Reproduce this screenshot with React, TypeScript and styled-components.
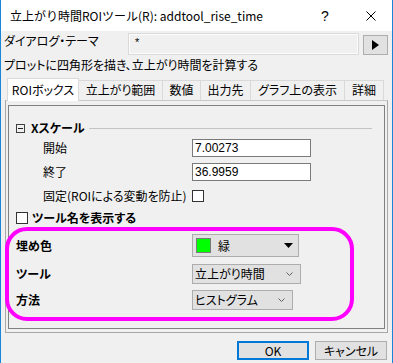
import React from "react";
import styled, { createGlobalStyle } from "styled-components";

const FONT = `"Noto Sans CJK JP", "Noto Sans", sans-serif`;

const GlobalStyle = createGlobalStyle`
  html, body { margin: 0; padding: 0; background: #f0f0f0; }
  body { width: 393px; height: 363px; overflow: hidden; }
`;

const Window = styled.div`
  width: 393px;
  height: 363px;
  box-sizing: border-box;
  border-left: 1px solid #1a86d9;
  border-right: 1px solid #1a86d9;
  background: #f0f0f0;
  display: flex;
  flex-direction: column;
  overflow: hidden;
  font-family: ${FONT};
  font-size: 12px;
  line-height: 16px;
  color: #000;
  font-feature-settings: "palt";
`;

const TitleBar = styled.div`
  height: 31px;
  flex-shrink: 0;
  background: #fff;
  display: flex;
  align-items: center;
  padding-left: 9px;
`;

const Title = styled.div`
  flex: 1;
  font-size: 12px;
  line-height: 16px;
  font-feature-settings: normal;
`;

const HelpGlyph = styled.div`
  width: 14px;
  text-align: center;
  font-family: "Liberation Sans", sans-serif;
  font-size: 14px;
  margin-right: 34px;
`;

const CloseGlyph = styled.svg`
  width: 10px;
  height: 10px;
  margin-right: 16px;
`;

const Body = styled.div`
  display: flex;
  flex-direction: column;
  padding-left: 3px;
`;

const ThemeRow = styled.div`
  display: flex;
  margin-top: 2px;
  height: 22px;
`;

const ThemeLabel = styled.div`
  width: 124px;
`;

const ThemeField = styled.div`
  width: 231px;
  height: 22px;
  box-sizing: border-box;
  border: 1px solid #dadada;
  box-shadow: inset 0 0 0 1px #fbfbfb;
  background: #f0f0f0;
  padding-left: 6px;
  font-family: "Liberation Sans", sans-serif;
  font-size: 11px;
  line-height: 16px;
`;

const ThemeButton = styled.div`
  width: 25px;
  height: 20px;
  margin-left: 4px;
  margin-top: 2px;
  box-sizing: border-box;
  border: 1px solid #adadad;
  background: #e1e1e1;
  display: flex;
  align-items: center;
  justify-content: center;
`;

const Description = styled.div`
  margin-top: 2px;
  line-height: 16px;
`;

const TabStrip = styled.div`
  display: flex;
  align-items: flex-end;
  height: 22px;
  margin-top: 5px;
  margin-left: 3px;
`;

const Tab = styled.div<{ $active?: boolean; $w: number }>`
  position: relative;
  width: ${(p) => p.$w}px;
  box-sizing: border-box;
  height: ${(p) => (p.$active ? 23 : 20)}px;
  margin-bottom: ${(p) => (p.$active ? -1 : 0)}px;
  margin-left: -1px;
  &:first-child { margin-left: 0; }
  z-index: ${(p) => (p.$active ? 2 : 1)};
  border: 1px solid #d9d9d9;
  border-bottom: none;
  background: ${(p) => (p.$active ? "#ffffff" : "#f0f0f0")};
  padding-top: ${(p) => (p.$active ? 3 : 1)}px;
  text-align: center;
  white-space: nowrap;
`;

const Panel = styled.div`
  margin-left: 1px;
  width: 383px;
  height: 233px;
  box-sizing: border-box;
  border: 1px solid #a8a8a8;
  border-top-color: #c8c8c8;
  display: flex;
  flex-direction: column;
`;

const Frame = styled.div`
  margin: 4px 2px 3px 2px;
  flex: 1;
  border: 1px solid #808080;
  display: flex;
  flex-direction: column;
`;

const HeadingRow = styled.div`
  display: flex;
  align-items: center;
  height: 16px;
  margin-top: 14px;
  padding-left: 7px;
`;

const CollapseBox = styled.div`
  width: 9px;
  height: 9px;
  box-sizing: border-box;
  border: 1px solid #404040;
  display: flex;
  align-items: center;
  justify-content: center;
  margin-right: 6px;
  &::after {
    content: "";
    width: 5px;
    height: 1px;
    background: #202020;
  }
`;

const Bold = styled.span`
  font-weight: bold;
`;

const Rule = styled.div`
  flex: 1;
  height: 0;
  border-top: 1px solid #c4c4c4;
  margin-left: 4px;
  margin-right: 12px;
`;

const FieldRow = styled.div<{ $h: number; $mt: number; $indent: number }>`
  display: grid;
  grid-template-columns: 183px auto;
  align-items: center;
  height: ${(p) => p.$h}px;
  margin-top: ${(p) => p.$mt}px;
  & > :first-child { padding-left: ${(p) => p.$indent}px; }
`;

const Label = styled.div<{ $bold?: boolean }>`
  font-weight: ${(p) => (p.$bold ? "bold" : "normal")};
  white-space: nowrap;
`;

const NumberInput = styled.div`
  width: 119px;
  height: 18px;
  box-sizing: border-box;
  border: 1px solid #7a7a7a;
  background: #fff;
  padding-left: 2px;
  font-family: "Liberation Sans", sans-serif;
  font-size: 12px;
  line-height: 16px;
`;

const CheckBox = styled.div`
  width: 12px;
  height: 12px;
  box-sizing: border-box;
  border: 1px solid #333;
  background: #fff;
`;

const CheckRow = styled.div`
  display: flex;
  align-items: center;
  gap: 4px;
  height: 12px;
  margin-top: 12px;
  padding-left: 7px;
`;

const Highlight = styled.div`
  margin: 3px 0 0 -4px;
  width: 349px;
  height: 94px;
  box-sizing: border-box;
  border: 4px solid #ff00ff;
  border-radius: 22px;
  display: flex;
  flex-direction: column;
  position: relative;
  z-index: 1;
`;

const ColorDrop = styled.div`
  width: 107px;
  height: 23px;
  box-sizing: border-box;
  border: 1px solid #adadad;
  background: #e1e1e1;
  display: flex;
  align-items: center;
`;

const Swatch = styled.div`
  width: 15px;
  height: 15px;
  box-sizing: border-box;
  border: 1px solid #7a7a7a;
  background: #00ff00;
  margin-left: 3px;
  margin-right: 7px;
`;

const DropArrow = styled.svg`
  margin-left: auto;
  margin-right: 5px;
  width: 9px;
  height: 5px;
`;

const Combo = styled.div<{ $w: number }>`
  width: ${(p) => p.$w}px;
  height: 20px;
  box-sizing: border-box;
  border: 1px solid #adadad;
  background: #e1e1e1;
  display: flex;
  align-items: center;
  padding-left: 2px;
  white-space: nowrap;
`;

const Chevron = styled.svg`
  margin-left: auto;
  margin-right: 7px;
  width: 7px;
  height: 4px;
`;

const ButtonRow = styled.div`
  display: flex;
  justify-content: flex-end;
  gap: 6px;
  margin-top: 8px;
  padding-right: 5px;
`;

const DialogButton = styled.div<{ $default?: boolean }>`
  width: 72px;
  height: 19px;
  box-sizing: border-box;
  border: ${(p) => (p.$default ? "2px solid #0078d7" : "1px solid #adadad")};
  background: #e1e1e1;
  display: flex;
  align-items: center;
  justify-content: center;
  line-height: 16px;
`;

const tabs = [
  { label: "ROIボックス", w: 72, active: true },
  { label: "立上がり範囲", w: 85 },
  { label: "数値", w: 39 },
  { label: "出力先", w: 51 },
  { label: "グラフ上の表示", w: 95 },
  { label: "詳細", w: 40 },
];

export default function App() {
  return (
    <>
      <GlobalStyle />
      <Window>
        <TitleBar>
          <Title>立上がり時間ROIツール(R): addtool_rise_time</Title>
          <HelpGlyph>?</HelpGlyph>
          <CloseGlyph viewBox="0 0 10 10">
            <path d="M0.5 0.5 L9.5 9.5 M9.5 0.5 L0.5 9.5" stroke="#000" strokeWidth="1" />
          </CloseGlyph>
        </TitleBar>
        <Body>
          <ThemeRow>
            <ThemeLabel>ダイアログ・テーマ</ThemeLabel>
            <ThemeField>*</ThemeField>
            <ThemeButton>
              <svg width="7" height="10" viewBox="0 0 7 10">
                <path d="M0 0 L7 5 L0 10 Z" fill="#000" />
              </svg>
            </ThemeButton>
          </ThemeRow>
          <Description>プロットに四角形を描き、立上がり時間を計算する</Description>
          <TabStrip>
            {tabs.map((t) => (
              <Tab key={t.label} $w={t.w} $active={t.active}>
                {t.label}
              </Tab>
            ))}
          </TabStrip>
          <Panel>
            <Frame>
              <HeadingRow>
                <CollapseBox />
                <Bold>Xスケール</Bold>
                <Rule />
              </HeadingRow>
              <FieldRow $h={18} $mt={3} $indent={34}>
                <Label>開始</Label>
                <NumberInput>7.00273</NumberInput>
              </FieldRow>
              <FieldRow $h={18} $mt={6} $indent={34}>
                <Label>終了</Label>
                <NumberInput>36.9959</NumberInput>
              </FieldRow>
              <FieldRow $h={12} $mt={7} $indent={34}>
                <Label>固定(ROIによる変動を防止)</Label>
                <CheckBox />
              </FieldRow>
              <CheckRow>
                <CheckBox />
                <Bold>ツール名を表示する</Bold>
              </CheckRow>
              <Highlight>
                <FieldRow $h={23} $mt={3} $indent={7}>
                  <Label $bold>埋め色</Label>
                  <ColorDrop>
                    <Swatch />
                    <span>緑</span>
                    <DropArrow viewBox="0 0 9 5">
                      <path d="M0 0 L9 0 L4.5 5 Z" fill="#000" />
                    </DropArrow>
                  </ColorDrop>
                </FieldRow>
                <FieldRow $h={20} $mt={7} $indent={7}>
                  <Label $bold>ツール</Label>
                  <Combo $w={109}>
                    立上がり時間
                    <Chevron viewBox="0 0 7 4">
                      <path d="M0.5 0.5 L3.5 3.5 L6.5 0.5" stroke="#606060" fill="none" strokeWidth="1" />
                    </Chevron>
                  </Combo>
                </FieldRow>
                <FieldRow $h={20} $mt={6} $indent={7}>
                  <Label $bold>方法</Label>
                  <Combo $w={101}>
                    ヒストグラム
                    <Chevron viewBox="0 0 7 4">
                      <path d="M0.5 0.5 L3.5 3.5 L6.5 0.5" stroke="#606060" fill="none" strokeWidth="1" />
                    </Chevron>
                  </Combo>
                </FieldRow>
              </Highlight>
            </Frame>
          </Panel>
          <ButtonRow>
            <DialogButton $default>OK</DialogButton>
            <DialogButton>キャンセル</DialogButton>
          </ButtonRow>
        </Body>
      </Window>
    </>
  );
}
